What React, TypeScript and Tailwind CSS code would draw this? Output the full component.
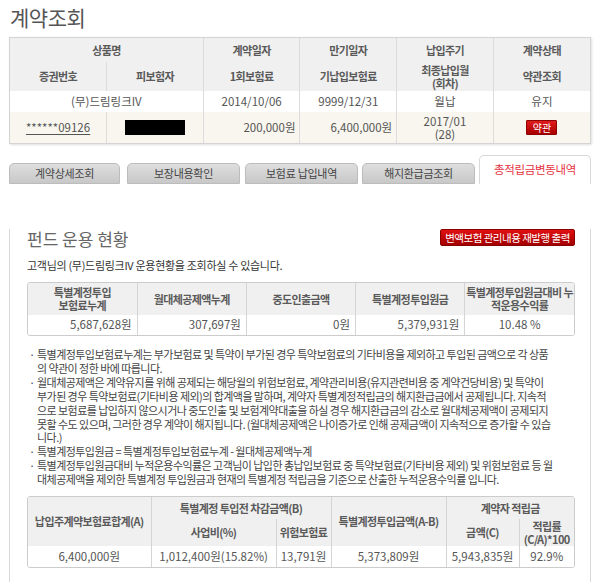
import React from "react";

const cell = "border-x border-[#dcdcdc] p-0 align-middle";
const th = `${cell} bg-[#f0f0f0] text-center font-bold text-[11px] tracking-[-0.6px] text-[#5a5a5a] leading-[13px]`;

function TopTable() {
  return (
    <div className="border border-[#d4d4d4] shadow-[1px_1px_2px_rgba(0,0,0,0.12)]">
      <table className="w-full table-fixed border-collapse border-hidden text-[11.5px] text-[#555]">
        <tbody>
          <tr className="h-[24px]">
            <td className={th} colSpan={2}>상품명</td>
            <td className={th}>계약일자</td>
            <td className={th}>만기일자</td>
            <td className={th}>납입주기</td>
            <td className={th}>계약상태</td>
          </tr>
          <tr className="h-[29px]">
            <td className={th}>증권번호</td>
            <td className={th}>피보험자</td>
            <td className={th}>1회보험료</td>
            <td className={th}>기납입보험료</td>
            <td className={th}>
              최종납입월
              <br />
              (회차)
            </td>
            <td className={th}>약관조회</td>
          </tr>
          <tr className="h-[21px] bg-white">
            <td className={`${cell} text-center`} colSpan={2}>(무)드림링크IV</td>
            <td className={`${cell} text-center`}>2014/10/06</td>
            <td className={`${cell} text-center`}>9999/12/31</td>
            <td className={`${cell} text-center`}>월납</td>
            <td className={`${cell} text-center`}>유지</td>
          </tr>
          <tr className="h-[31px] bg-[#f8f6ee]">
            <td className={`${cell} text-center`}>
              <span className="underline underline-offset-2">******09126</span>
            </td>
            <td className={`${cell}`}>
              <div className="mx-auto h-[15px] w-[60px] bg-black" />
            </td>
            <td className={`${cell} text-right pr-[4px]`}>200,000원</td>
            <td className={`${cell} text-right pr-[4px]`}>6,400,000원</td>
            <td className={`${cell} text-center leading-[13px]`}>
              2017/01
              <br />
              (28)
            </td>
            <td className={`${cell} text-center`}>
              <span className="inline-flex h-[15px] w-[31px] items-center justify-center rounded-[1px] border border-[#8c0000] bg-linear-to-b from-[#e21b1b] to-[#a80000] text-[10px] leading-none text-white">
                약관
              </span>
            </td>
          </tr>
        </tbody>
      </table>
    </div>
  );
}

function Tab({ label, w, ml }: { label: string; w: string; ml: string }) {
  return (
    <div
      className={`${w} ${ml} flex h-[21px] items-center justify-center rounded-t-[5px] border border-[#bcbcbc] bg-linear-to-b from-[#dedede] to-[#c8c8c8] text-[11px] tracking-[-0.3px] text-[#444]`}
    >
      {label}
    </div>
  );
}

function Tabs() {
  return (
    <div className="mt-[11px] flex h-[29px] items-end">
      <Tab label="계약상세조회" w="w-[111px]" ml="ml-0" />
      <Tab label="보장내용확인" w="w-[113px]" ml="ml-[7px]" />
      <Tab label="보험료 납입내역" w="w-[113px]" ml="ml-[5px]" />
      <Tab label="해지환급금조회" w="w-[113px]" ml="ml-[4px]" />
      <div className="ml-[4px] flex h-[29px] w-[112px] items-center justify-center rounded-t-[5px] border border-b-0 border-[#d8d8d8] bg-white text-[11.5px] tracking-[-0.3px] text-[#e5333f]">
        총적립금변동내역
      </div>
    </div>
  );
}

const th2 = "border-x border-[#d4d4d4] bg-[#f0f0f0] text-center font-bold text-[11px] tracking-[-0.6px] text-[#5a5a5a] leading-[13px] p-0 align-middle";
const td2 = "border-x border-[#d4d4d4] text-[11.5px] text-[#555] p-0 align-middle";

function FundTable() {
  return (
    <div className="mt-[10px] overflow-hidden rounded-[3px] border border-[#cccccc]">
      <table className="w-full table-fixed border-collapse border-hidden">
        <tbody>
          <tr className="h-[32px]">
            <td className={th2}>
              특별계정투입
              <br />
              보험료누계
            </td>
            <td className={th2}>월대체공제액누계</td>
            <td className={th2}>중도인출금액</td>
            <td className={th2}>특별계정투입원금</td>
            <td className={th2}>
              특별계정투입원금대비 누
              <br />
              적운용수익률
            </td>
          </tr>
          <tr className="h-[20px] bg-white">
            <td className={`${td2} text-right pr-[5px]`}>5,687,628원</td>
            <td className={`${td2} text-right pr-[5px]`}>307,697원</td>
            <td className={`${td2} text-right pr-[5px]`}>0원</td>
            <td className={`${td2} text-right pr-[5px]`}>5,379,931원</td>
            <td className={`${td2} text-center`}>10.48 %</td>
          </tr>
        </tbody>
      </table>
    </div>
  );
}

function SummaryTable() {
  return (
    <div className="mt-[9px] overflow-hidden rounded-[3px] border border-[#cccccc]">
      <table className="w-full table-fixed border-collapse border-hidden">
        <colgroup>
          <col className="w-[123px]" />
          <col className="w-[125px]" />
          <col className="w-[55px]" />
          <col className="w-[115px]" />
          <col className="w-[73px]" />
          <col />
        </colgroup>
        <tbody>
          <tr className="h-[22px]">
            <td className={th2} rowSpan={2}>납입주계약보험료합계(A)</td>
            <td className={th2} colSpan={2}>특별계정 투입전 차감금액(B)</td>
            <td className={th2} rowSpan={2}>특별계정투입금액(A-B)</td>
            <td className={th2} colSpan={2}>계약자 적립금</td>
          </tr>
          <tr className="h-[27px]">
            <td className={th2}>사업비(%)</td>
            <td className={th2}>위험보험료</td>
            <td className={th2}>금액(C)</td>
            <td className={th2}>
              적립률
              <br />
              (C/A)*100
            </td>
          </tr>
          <tr className="h-[21px] bg-white">
            <td className={`${td2} text-center`}>6,400,000원</td>
            <td className={`${td2} text-center`}>1,012,400원(15.82%)</td>
            <td className={`${td2} text-center`}>13,791원</td>
            <td className={`${td2} text-center`}>5,373,809원</td>
            <td className={`${td2} text-center`}>5,943,835원</td>
            <td className={`${td2} text-center`}>92.9%</td>
          </tr>
        </tbody>
      </table>
    </div>
  );
}

function Bullet({ lines }: { lines: string[] }) {
  return (
    <li className="flex">
      <span className="w-[10px] shrink-0 pl-[2px]">·</span>
      <span className="whitespace-nowrap">
        {lines.map((l, i) => (
          <React.Fragment key={i}>
            {i > 0 && <br />}
            {l}
          </React.Fragment>
        ))}
      </span>
    </li>
  );
}

function Notes() {
  return (
    <ul className="mt-[12px] text-[11px] leading-[13.9px] tracking-[-0.55px] text-[#444]">
      <Bullet
        lines={[
          "특별계정투입보험료누계는 부가보험료 및 특약이 부가된 경우 특약보험료의 기타비용을 제외하고 투입된 금액으로 각 상품",
          "의 약관이 정한 바에 따릅니다.",
        ]}
      />
      <Bullet
        lines={[
          "월대체공제액은 계약유지를 위해 공제되는 해당월의 위험보험료, 계약관리비용(유지관련비용 중 계약건당비용) 및 특약이",
          "부가된 경우 특약보험료(기타비용 제외)의 합계액을 말하며, 계약자 특별계정적립금의 해지환급금에서 공제됩니다. 지속적",
          "으로 보험료를 납입하지 않으시거나 중도인출 및 보험계약대출을 하실 경우 해지환급금의 감소로 월대체공제액이 공제되지",
          "못할 수도 있으며, 그러한 경우 계약이 해지됩니다. (월대체공제액은 나이증가로 인해 공제금액이 지속적으로 증가할 수 있습",
          "니다.)",
        ]}
      />
      <Bullet lines={["특별계정투입원금 = 특별계정투입보험료누계 - 월대체공제액누계"]} />
      <Bullet
        lines={[
          "특별계정투입원금대비 누적운용수익률은 고객님이 납입한 총납입보험료 중 특약보험료(기타비용 제외) 및 위험보험료 등 월",
          "대체공제액을 제외한 특별계정 투입원금과 현재의 특별계정 적립금을 기준으로 산출한 누적운용수익률 입니다.",
        ]}
      />
    </ul>
  );
}

function Panel() {
  return (
    <div className="h-[396px] border-x border-b border-[#d8d8d8] pl-[17px] pr-[15px]">
      <div className="mt-[45px] flex items-start justify-between">
        <h2 className="text-[17px] leading-[20px] tracking-[0px] text-[#666]">펀드 운용 현황</h2>
        <button className="flex h-[17px] w-[135px] items-center justify-center rounded-[2px] border border-[#8a0000] bg-linear-to-b from-[#e01010] to-[#a30000] text-[10.5px] tracking-[-0.5px] text-white">
          변액보험 관리내용 재발행 출력
        </button>
      </div>
      <p className="mt-[9px] text-[11px] leading-[14px] tracking-[-0.3px] text-[#333]">
        고객님의 (무)드림링크IV 운용현황을 조회하실 수 있습니다.
      </p>
      <FundTable />
      <Notes />
      <SummaryTable />
    </div>
  );
}

export default function App() {
  return (
    <div className="h-[582px] w-[600px] overflow-hidden bg-white font-['Noto_Sans_CJK_KR','Noto_Sans',sans-serif] text-[#555]">
      <div className="px-[9px]">
        <h1 className="h-[37px] pl-[1px] pt-[2px] text-[21px] leading-[30px] tracking-[-0.5px] text-[#555]">계약조회</h1>
        <TopTable />
        <Tabs />
        <Panel />
      </div>
    </div>
  );
}
